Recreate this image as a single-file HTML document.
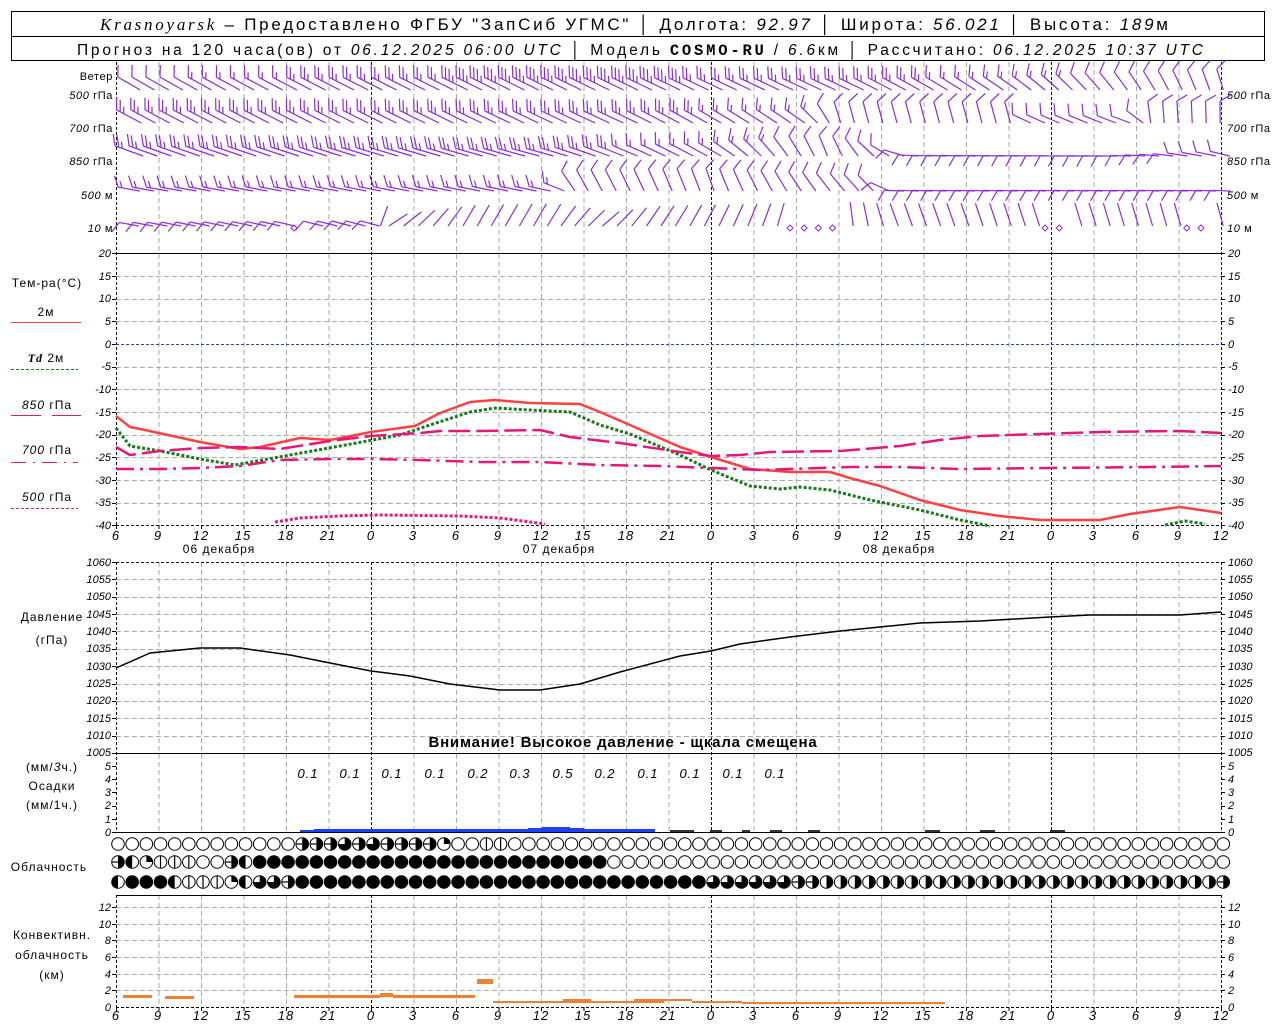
<!DOCTYPE html>
<html><head><meta charset="utf-8">
<style>
html,body{margin:0;padding:0;background:#fff;}
svg{display:block;font-family:"Liberation Sans",sans-serif;}
.t{font-size:11px;fill:#000;letter-spacing:0.6px;}
.ax{font-size:11px;font-style:italic;fill:#000;}
.axb{font-size:13px;font-style:italic;fill:#000;letter-spacing:1px;}
</style></head><body>
<svg id="s" width="1280" height="1024" viewBox="0 0 1280 1024" xmlns="http://www.w3.org/2000/svg">
<rect x="0" y="0" width="1280" height="1024" fill="#fff"/>
<rect x="11.5" y="11.5" width="1253" height="49" fill="none" stroke="#000" stroke-width="1"/>
<line x1="11" y1="36.5" x2="1265" y2="36.5" stroke="#000"/>
<text x="100" y="30" font-size="17" fill="#000" textLength="1068" lengthAdjust="spacing"><tspan font-family="Liberation Serif" font-style="italic">Krasnoyarsk</tspan> – Предоставлено ФГБУ "ЗапСиб УГМС" │ Долгота: <tspan font-style="italic">92.97</tspan> │ Широта: <tspan font-style="italic">56.021</tspan> │ Высота: <tspan font-style="italic">189</tspan>м</text>
<text x="77" y="55" font-size="15.5" fill="#000" textLength="1126" lengthAdjust="spacing">Прогноз на 120 часа(ов) от <tspan font-style="italic">06.12.2025 06:00 UTC</tspan>  │ Модель <tspan font-family="Liberation Mono" font-weight="bold">COSMO-RU</tspan> / <tspan font-style="italic">6.6</tspan>км │ Рассчитано: <tspan font-style="italic">06.12.2025 10:37 UTC</tspan></text>

<g id="grid"></g>
<g id="data"></g>

<g class="t" text-anchor="end">
<text x="113" y="80">Ветер</text>
<text x="113" y="99"><tspan font-style="italic">500</tspan> гПа</text>
<text x="113" y="132"><tspan font-style="italic">700</tspan> гПа</text>
<text x="113" y="165"><tspan font-style="italic">850</tspan> гПа</text>
<text x="113" y="199"><tspan font-style="italic">500</tspan> м</text>
<text x="113" y="232"><tspan font-style="italic">10</tspan>   м</text>
</g>
<g class="t">
<text x="1227" y="99"><tspan font-style="italic">500</tspan> гПа</text>
<text x="1227" y="132"><tspan font-style="italic">700</tspan> гПа</text>
<text x="1227" y="165"><tspan font-style="italic">850</tspan> гПа</text>
<text x="1227" y="199"><tspan font-style="italic">500</tspan> м</text>
<text x="1227" y="232"><tspan font-style="italic">10</tspan>   м</text>
</g>

<g text-anchor="middle" style="font-size:12px;letter-spacing:1px;fill:#000">
<text x="47" y="287">Тем-ра(°С)</text>
<text x="46" y="316">2м</text>
<text x="46" y="362"><tspan font-style="italic" font-weight="bold" font-family="Liberation Serif">Td</tspan>  2м</text>
<text x="47" y="409"><tspan font-style="italic">850</tspan> гПа</text>
<text x="47" y="454"><tspan font-style="italic">700</tspan> гПа</text>
<text x="47" y="501"><tspan font-style="italic">500</tspan> гПа</text>
<text x="52" y="621">Давление</text>
<text x="52" y="644">(гПа)</text>
<text x="52" y="771">(мм/<tspan font-style="italic">3</tspan>ч.)</text>
<text x="52" y="790">Осадки</text>
<text x="52" y="809">(мм/1ч.)</text>
<text x="49" y="871">Облачность</text>
<text x="52" y="939">Конвективн.</text>
<text x="52" y="959">облачность</text>
<text x="52" y="979">(км)</text>
</g>
<line x1="11" y1="322.5" x2="81" y2="322.5" stroke="#ff4040" stroke-width="1"/>
<line x1="11" y1="369.5" x2="78" y2="369.5" stroke="#1a7a1a" stroke-dasharray="3,2"/>
<line x1="11" y1="415.5" x2="41" y2="415.5" stroke="#e8157a"/><line x1="52" y1="415.5" x2="81" y2="415.5" stroke="#e8157a"/>
<line x1="11" y1="462.5" x2="78" y2="462.5" stroke="#e8157a" stroke-dasharray="15,7,2,7"/>
<line x1="11" y1="508.5" x2="78" y2="508.5" stroke="#e8157a" stroke-dasharray="3,2"/>

<text x="623" y="747" text-anchor="middle" style="font-size:15px;font-weight:bold;letter-spacing:0.8px" fill="#000">Внимание! Высокое давление - щкала смещена</text>

<g text-anchor="middle" style="font-size:12px;letter-spacing:1px;fill:#000">
<text x="219" y="553">06 декабря</text>
<text x="559" y="553">07 декабря</text>
<text x="899" y="553">08 декабря</text>
</g>
<g text-anchor="middle" style="font-size:13px;font-style:italic;letter-spacing:1px;fill:#000">
<text x="308" y="778">0.1</text><text x="350" y="778">0.1</text><text x="392" y="778">0.1</text><text x="435" y="778">0.1</text><text x="478" y="778">0.2</text><text x="520" y="778">0.3</text><text x="563" y="778">0.5</text><text x="605" y="778">0.2</text><text x="648" y="778">0.1</text><text x="690" y="778">0.1</text><text x="733" y="778">0.1</text><text x="775" y="778">0.1</text>
</g>
<g class="axb" text-anchor="middle">
<text x="116" y="540">6</text><text x="158" y="540">9</text><text x="201" y="540">12</text><text x="243" y="540">15</text><text x="286" y="540">18</text><text x="328" y="540">21</text><text x="371" y="540">0</text><text x="413" y="540">3</text><text x="456" y="540">6</text><text x="498" y="540">9</text><text x="541" y="540">12</text><text x="583" y="540">15</text><text x="626" y="540">18</text><text x="668" y="540">21</text><text x="711" y="540">0</text><text x="753" y="540">3</text><text x="796" y="540">6</text><text x="838" y="540">9</text><text x="881" y="540">12</text><text x="923" y="540">15</text><text x="966" y="540">18</text><text x="1008" y="540">21</text><text x="1051" y="540">0</text><text x="1093" y="540">3</text><text x="1136" y="540">6</text><text x="1178" y="540">9</text><text x="1221" y="540">12</text>
<text x="116" y="1020">6</text><text x="158" y="1020">9</text><text x="201" y="1020">12</text><text x="243" y="1020">15</text><text x="286" y="1020">18</text><text x="328" y="1020">21</text><text x="371" y="1020">0</text><text x="413" y="1020">3</text><text x="456" y="1020">6</text><text x="498" y="1020">9</text><text x="541" y="1020">12</text><text x="583" y="1020">15</text><text x="626" y="1020">18</text><text x="668" y="1020">21</text><text x="711" y="1020">0</text><text x="753" y="1020">3</text><text x="796" y="1020">6</text><text x="838" y="1020">9</text><text x="881" y="1020">12</text><text x="923" y="1020">15</text><text x="966" y="1020">18</text><text x="1008" y="1020">21</text><text x="1051" y="1020">0</text><text x="1093" y="1020">3</text><text x="1136" y="1020">6</text><text x="1178" y="1020">9</text><text x="1221" y="1020">12</text>
</g>
<g class="ax" text-anchor="end">
<text x="111" y="257">20</text><text x="111" y="280">15</text><text x="111" y="302">10</text><text x="111" y="325">5</text><text x="111" y="348">0</text><text x="111" y="370">-5</text><text x="111" y="393">-10</text><text x="111" y="416">-15</text><text x="111" y="438">-20</text><text x="111" y="461">-25</text><text x="111" y="484">-30</text><text x="111" y="506">-35</text><text x="111" y="529">-40</text>
<text x="111" y="566">1060</text><text x="111" y="583">1055</text><text x="111" y="600">1050</text><text x="111" y="618">1045</text><text x="111" y="635">1040</text><text x="111" y="652">1035</text><text x="111" y="670">1030</text><text x="111" y="687">1025</text><text x="111" y="704">1020</text><text x="111" y="722">1015</text><text x="111" y="739">1010</text><text x="111" y="756">1005</text>
<text x="111" y="770">5</text><text x="111" y="783">4</text><text x="111" y="796">3</text><text x="111" y="809">2</text><text x="111" y="823">1</text><text x="111" y="836">0</text>
<text x="111" y="911">12</text><text x="111" y="928">10</text><text x="111" y="944">8</text><text x="111" y="961">6</text><text x="111" y="978">4</text><text x="111" y="994">2</text><text x="111" y="1011">0</text>
</g>
<g class="ax">
<text x="1228" y="257">20</text><text x="1228" y="280">15</text><text x="1228" y="302">10</text><text x="1228" y="325">5</text><text x="1228" y="348">0</text><text x="1228" y="370">-5</text><text x="1228" y="393">-10</text><text x="1228" y="416">-15</text><text x="1228" y="438">-20</text><text x="1228" y="461">-25</text><text x="1228" y="484">-30</text><text x="1228" y="506">-35</text><text x="1228" y="529">-40</text>
<text x="1228" y="566">1060</text><text x="1228" y="583">1055</text><text x="1228" y="600">1050</text><text x="1228" y="618">1045</text><text x="1228" y="635">1040</text><text x="1228" y="652">1035</text><text x="1228" y="670">1030</text><text x="1228" y="687">1025</text><text x="1228" y="704">1020</text><text x="1228" y="722">1015</text><text x="1228" y="739">1010</text><text x="1228" y="756">1005</text>
<text x="1228" y="770">5</text><text x="1228" y="783">4</text><text x="1228" y="796">3</text><text x="1228" y="809">2</text><text x="1228" y="823">1</text><text x="1228" y="836">0</text>
<text x="1228" y="911">12</text><text x="1228" y="928">10</text><text x="1228" y="944">8</text><text x="1228" y="961">6</text><text x="1228" y="978">4</text><text x="1228" y="994">2</text><text x="1228" y="1011">0</text>
</g>
</svg>
<script>
(function(){
var NS="http://www.w3.org/2000/svg";
var G=document.getElementById("grid"),D=document.getElementById("data");
function el(p,tag,a){var e=document.createElementNS(NS,tag);for(var k in a)e.setAttribute(k,a[k]);p.appendChild(e);return e;}
function ln(p,x1,y1,x2,y2,st,w,da){var a={x1:x1,y1:y1,x2:x2,y2:y2,stroke:st,"stroke-width":w||1};if(da)a["stroke-dasharray"]=da;return el(p,"line",a);}
var X0=116,XS=42.5;
var bands=[[62,525],[562,832],[895,1007]];
for(var k=0;k<=26;k++){var x=X0+XS*k+0.5;
 bands.forEach(function(b){
  if(k==6||k==14||k==22||k==0||k==26) ln(G,x,b[0],x,b[1],"#000",1,"3,2");
  else ln(G,x,b[0],x,b[1],"#aaa",1,"5,3");
 });
 ln(G,x,525,x,529,"#000",1);ln(G,x,1007,x,1011,"#000",1);
}
for(var T=20;T>=-40;T-=5){var y=Math.round(344-T*4.533)+0.5;
 if(T==20) ln(G,116,y,1221,y,"#000",1);
 else if(T==0) ln(G,116,y,1221,y,"#2040ff",1,"3,2");
 else if(T==-40) ln(G,116,y,1221,y,"#000",1,"3,2");
 else ln(G,116,y,1221,y,"#aaa",1,"5,3");
 ln(G,112,y,116,y,"#000");ln(G,1221,y,1225,y,"#000");}
for(var P=1060;P>=1005;P-=5){var y=Math.round(562+(1060-P)*3.4727)+0.5;
 if(P==1060) ln(G,116,y,1221,y,"#000",1,"3,2");
 else if(P==1005) ln(G,116,y,1221,y,"#000",1);
 else ln(G,116,y,1221,y,"#aaa",1,"5,3");
 ln(G,112,y,116,y,"#000");ln(G,1221,y,1225,y,"#000");}
ln(G,116,832.5,1221,832.5,"#000",1);
for(var m=0;m<=5;m++){var y=Math.round(832-m*13.2)+0.5;ln(G,112,y,116,y,"#000");ln(G,1221,y,1225,y,"#000");}
ln(G,116,895.5,1221,895.5,"#000",1);
for(var c=2;c<=12;c+=2){var y=Math.round(1007-c*8.33)+0.5;ln(G,116,y,1221,y,"#aaa",1,"5,3");ln(G,112,y,116,y,"#000");ln(G,1221,y,1225,y,"#000");}
ln(G,116,1007.5,1221,1007.5,"#000",1,"3,2");
ln(G,116,253.5,1221,253.5,"#000",1);

function poly(pts,st,w,da){el(D,"polyline",{points:pts.map(function(p){return p.join(",")}).join(" "),fill:"none",stroke:st,"stroke-width":w,"stroke-dasharray":da||"none","stroke-linejoin":"round"});}
poly([[116,416],[130,427],[145,430],[200,442],[240,449],[260,447],[300,438],[330,440],[371,432],[415,426],[440,413],[470,402],[495,400],[530,403],[580,404],[600,412],[630,425],[680,447],[711,457],[750,469],[790,472],[830,472],[850,478],[880,486],[920,500],[960,510],[1000,516],[1040,520],[1100,520],[1130,514],[1180,507],[1221,513]],"#ff4040",2.5);
poly([[116,428],[130,446],[160,451],[200,459],[235,465],[290,455],[340,446],[400,435],[430,425],[470,412],[495,408],[530,410],[570,412],[600,425],[630,434],[680,455],[711,470],[750,486],[780,489],[800,487],[830,490],[870,500],[920,510],[960,520],[990,526]],"#1a7a1a",3,"3,2");
poly([[1165,525],[1185,521],[1205,524]],"#1a7a1a",3,"3,2");
poly([[116,447],[130,455],[145,453],[160,451],[200,448],[240,447],[280,449],[330,441],[371,436],[420,433],[440,431],[480,431],[540,430],[570,437],[620,443],[680,452],[711,456],[740,455],[770,452],[840,451],[900,446],[940,440],[980,436],[1040,434],[1100,432],[1180,431],[1221,433]],"#e8157a",2.5,"22,6");
poly([[116,469],[160,469],[200,468],[240,466],[280,460],[330,459],[371,459],[420,460],[480,462],[540,462],[600,465],[660,466],[711,468],[760,470],[850,467],[900,467],[960,469],[1050,468],[1150,467],[1221,466]],"#e8157a",2.5,"18,6,3,6");
poly([[275,522],[300,518],[340,516],[380,515],[460,516],[500,518],[545,524]],"#e8157a",3,"3,2");
poly([[116,668],[150,653],[200,648],[240,648],[290,655],[330,663],[371,671],[410,676],[450,684],[500,690],[540,690],[580,684],[620,672],[680,656],[711,651],[740,644],[790,637],[840,631],[880,627],[920,623],[980,621],[1050,617],[1090,615],[1180,615],[1221,612]],"#000",1.5);

function rect(x,y,w,h,f){el(D,"rect",{x:x,y:y,width:w,height:h,fill:f});}
rect(300,830,14,2,"#2040ff");rect(314,829,214,3,"#2040ff");rect(528,828,14,4,"#2040ff");rect(542,827,14,5,"#2040ff");rect(556,827,14,5,"#2040ff");rect(570,828,14,4,"#2040ff");rect(584,829,71,3,"#2040ff");
[[670,694],[710,722],[742,750],[770,782],[808,820],[925,940],[980,995],[1050,1065]].forEach(function(b){rect(b[0],830,b[1]-b[0],2,"#333");});
var O="#f08030";
rect(123,995,29,3,O);rect(165,996,29,3,O);rect(294,995,77,3,O);rect(371,995,9,3,O);rect(380,993,13,4,O);rect(393,995,82,3,O);rect(477,979,16,5,O);
rect(493,1001,70,2,O);rect(563,999,28,4,O);rect(591,1001,43,2,O);rect(634,999,30,4,O);rect(664,999,28,2,O);rect(692,1001,50,2,O);rect(742,1002,203,2,O);

var rows=[
 "ooooooooooooo"+"TTTQTQTTTTq"+"oovv"+"o".repeat(51),
 "TLqvvvooTL"+"f".repeat(25)+"o".repeat(44),
 "LfffLvvvqLQQT"+"f".repeat(29)+"QQQQQQ"+"TT"+"R".repeat(28)+"T"
];
var ry=[844,862,882];
rows.forEach(function(r,ri){
 for(var i=0;i<79;i++){var ch=r[i]||"o";var cx=116+14.17*i+2,cy=ry[ri],R=6.3;
  var g=el(D,"g",{});
  if(ch=="f"){el(g,"circle",{cx:cx,cy:cy,r:R+0.5,fill:"#000"});continue;}
  el(g,"circle",{cx:cx,cy:cy,r:R,fill:"#fff",stroke:"#000","stroke-width":1});
  if(ch=="L") el(g,"path",{d:"M"+cx+","+(cy-R)+"A"+R+","+R+" 0 0 0 "+cx+","+(cy+R)+"Z",fill:"#000"});
  if(ch=="R"||ch=="T") el(g,"path",{d:"M"+cx+","+(cy-R)+"A"+R+","+R+" 0 0 1 "+cx+","+(cy+R)+"Z",fill:"#000"});
  if(ch=="T") ln(g,cx-R,cy,cx,cy,"#000",1.2);
  if(ch=="Q") el(g,"path",{d:"M"+cx+","+cy+"L"+cx+","+(cy-R)+"A"+R+","+R+" 0 1 1 "+(cx-R)+","+cy+"Z",fill:"#000"});
  if(ch=="q") el(g,"path",{d:"M"+cx+","+cy+"L"+cx+","+(cy-R)+"A"+R+","+R+" 0 0 1 "+(cx+R)+","+cy+"Z",fill:"#000"});
  if(ch=="v") ln(g,cx,cy-R,cx,cy+R,"#000",1.2);
 }
});

var V="#8a2be2";
function barb(bx,by,ang,n,L,side){
 var a=ang*Math.PI/180,dx=Math.cos(a),dy=Math.sin(a);
 var tx=bx+L*dx,ty=by+L*dy;
 var s="M"+bx.toFixed(1)+","+by.toFixed(1)+"L"+tx.toFixed(1)+","+ty.toFixed(1);
 var ba=(ang+side*62)*Math.PI/180;
 for(var j=0;j<n;j++){var px=tx-j*4*dx,py=ty-j*4*dy;var bl=(j==n-1&&n>1)?7:12;
  s+="M"+px.toFixed(1)+","+py.toFixed(1)+"l"+(bl*Math.cos(ba)).toFixed(1)+","+(bl*Math.sin(ba)).toFixed(1);}
 el(D,"path",{d:s,stroke:V,"stroke-width":1.2,fill:"none"});
}
function interp(keys,x){ if(x<=keys[0][0])return keys[0].slice(1);
 for(var i=1;i<keys.length;i++){if(x<=keys[i][0]){var k0=keys[i-1],k1=keys[i];var f=(x-k0[0])/(k1[0]-k0[0]);
  return [k0[1]+(k1[1]-k0[1])*f, f<0.5?k0[2]:k1[2], k0[3]+(k1[3]-k0[3])*f, f<0.5?k0[4]:k1[4]];}}
 return keys[keys.length-1].slice(1);}
var R5=[[116,210,1,26,1],[240,208,2,27,1],[330,207,3,28,1],[540,206,4,29,1],[830,205,3,27,1],[1000,215,2,24,1],[1120,235,1,22,1],[1221,255,1,22,1]];
var R7=[[116,208,3,28,1],[600,205,3,28,1],[790,215,2,24,1],[830,255,1,22,1],[1000,255,1,22,1],[1010,205,1,20,1],[1120,200,1,20,1],[1140,265,1,22,1],[1221,270,1,22,1]];
var R8=[[116,200,3,30,1],[520,195,3,28,1],[700,210,2,26,1],[820,250,1,22,1],[860,220,1,22,1],[900,182,1,20,-1],[1100,180,1,20,-1],[1221,195,1,20,1]];
var R50=[[116,190,2,22,1],[540,192,2,22,1],[560,240,1,24,1],[700,250,1,24,1],[860,225,1,22,1],[880,182,1,20,-1],[1221,182,1,20,-1]];
var R10=[[116,190,1,20,-1],[360,195,1,20,-1],[380,330,0,22,1],[460,300,0,24,1],[540,300,0,26,1],[600,320,0,22,1],[640,305,0,24,1],[760,290,0,24,1],[880,250,0,24,1],[1221,255,0,24,1]];
var calm10=[12,47,48,49,50,65,66,75,76];
var rowsW=[[R5,92],[R7,125],[R8,158],[R50,193],[R10,228]];
rowsW.forEach(function(rw,ri){
 for(var i=0;i<78;i++){var x=116+14.17*i+3;
  if(ri==4&&calm10.indexOf(i)>=0){el(D,"path",{d:"M"+(x+2)+",228l3,-3l3,3l-3,3z",stroke:V,fill:"none","stroke-width":1});continue;}
  var p=interp(rw[0],x);var bx=x-p[2]*Math.cos(p[0]*Math.PI/180)*0.5+10;
  barb(bx,rw[1]-2,p[0],p[1],p[2],p[3]);}
});
})();
</script>
</body></html>
